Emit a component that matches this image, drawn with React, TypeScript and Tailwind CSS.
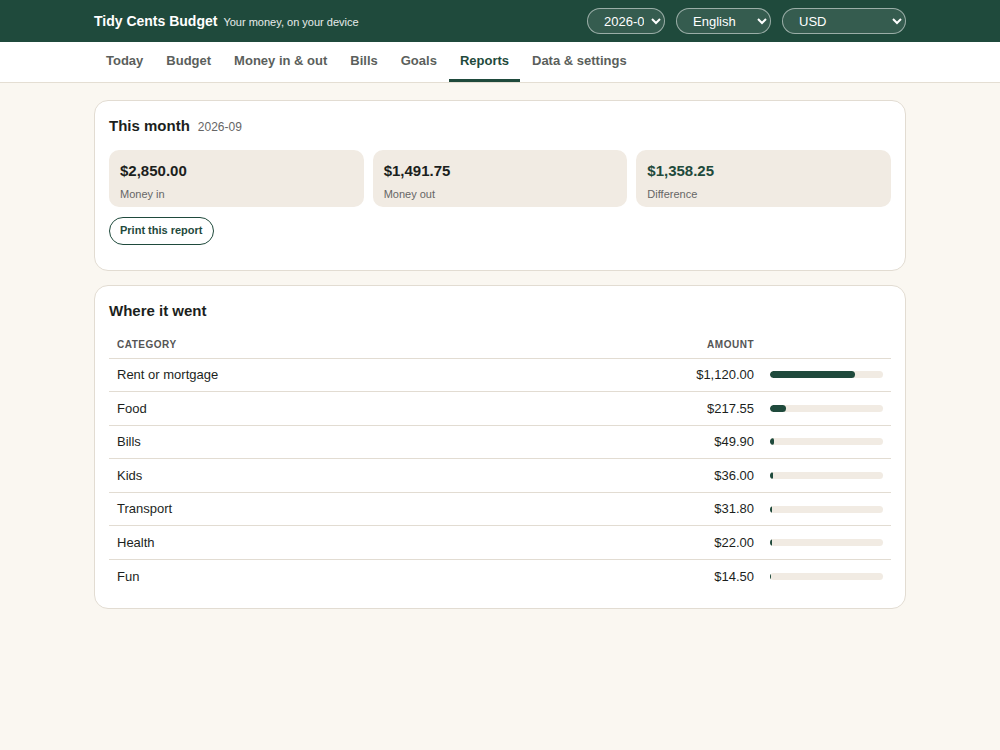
const rows: [string, number][] = [
  ["Rent or mortgage", 1120],
  ["Food", 217.55],
  ["Bills", 49.9],
  ["Kids", 36],
  ["Transport", 31.8],
  ["Health", 22],
  ["Fun", 14.5],
]
const total = 1491.75
const fmt = (n: number) => "$" + n.toLocaleString("en-US", { minimumFractionDigits: 2, maximumFractionDigits: 2 })

const tabs = ["Today", "Budget", "Money in & out", "Bills", "Goals", "Reports", "Data & settings"]

function Sel({ value, options, w }: { value: string; options: string[]; w: string }) {
  return (
    <select
      defaultValue={value}
      className={`${w} h-[26px] rounded-full border border-white/50 bg-white/10 text-white text-[13px] pl-3 pr-1`}
    >
      {options.map((o) => (
        <option key={o} className="text-black">{o}</option>
      ))}
    </select>
  )
}

export default function App() {
  return (
    <div className="min-h-[750px] bg-[#faf7f1] text-[#1c1f1d]" style={{ fontFamily: "'Liberation Sans', Arial, sans-serif" }}>
      <header className="h-[42px] bg-[#1f4a3c] text-white">
        <div className="mx-auto w-[812px] h-full flex items-center justify-between">
          <div className="flex items-baseline gap-[6px]">
            <span className="font-bold text-[14px]">Tidy Cents Budget</span>
            <span className="text-[11px] text-white/90">Your money, on your device</span>
          </div>
          <div className="flex items-center gap-[11px]">
            <Sel value="2026-09" options={["2026-09"]} w="w-[78px]" />
            <Sel value="English" options={["English"]} w="w-[95px]" />
            <Sel value="USD" options={["USD"]} w="w-[124px]" />
          </div>
        </div>
      </header>
      <nav className="h-[41px] bg-white border-b border-[#e4ded3]">
        <div className="mx-auto w-[812px] h-full flex">
          {tabs.map((t) => (
            <div
              key={t}
              className={`px-[11px] ml-[1px] h-full flex items-center text-[13px] font-bold border-b-[3px] ${
                t === "Reports" ? "text-[#1f4a3c] border-[#1f4a3c]" : "text-[#5b5f5c] border-transparent"
              }`}
            >
              {t}
            </div>
          ))}
        </div>
      </nav>
      <main className="mx-auto w-[812px] pt-[17px] flex flex-col gap-[14px]">
        <section className="bg-white border border-[#e2dcd2] rounded-[14px] px-[14px] pt-[14px] pb-[25px]">
          <div className="flex items-baseline gap-2">
            <h2 className="text-[15px] font-bold">This month</h2>
            <span className="text-[12px] text-[#666]">2026-09</span>
          </div>
          <div className="grid grid-cols-3 gap-[9px] mt-[12px]">
            {[
              ["$2,850.00", "Money in", ""],
              ["$1,491.75", "Money out", ""],
              ["$1,358.25", "Difference", "text-[#1f4a3c]"],
            ].map(([v, l, c]) => (
              <div key={l} className="h-[57px] bg-[#f1ebe3] rounded-[10px] px-[11px] pt-[10px]">
                <div className={`text-[15px] font-bold ${c}`}>{v}</div>
                <div className="text-[11px] text-[#666] mt-[4px]">{l}</div>
              </div>
            ))}
          </div>
          <button className="mt-[10px] h-[28px] px-[10px] rounded-full border border-[#1f4a3c] text-[#1f4a3c] text-[11px] font-bold">
            Print this report
          </button>
        </section>
        <section className="bg-white border border-[#e2dcd2] rounded-[14px] px-[14px] pt-[14px] pb-[15px]">
          <h2 className="text-[15px] font-bold">Where it went</h2>
          <table className="w-full mt-[9px] text-[13px]">
            <thead>
              <tr className="text-[10px] tracking-wider text-[#555] font-bold border-b border-[#e2dcd2]">
                <th className="text-left px-2 h-[27px] font-bold">CATEGORY</th>
                <th className="text-right px-2 font-bold">AMOUNT</th>
                <th className="w-[129px]" />
              </tr>
            </thead>
            <tbody>
              {rows.map(([n, a], i) => (
                <tr key={n} className={i < rows.length - 1 ? "border-b border-[#e2dcd2]" : ""}>
                  <td className="px-2 h-[33.6px]">{n}</td>
                  <td className="px-2 text-right">{fmt(a)}</td>
                  <td className="pl-2 pr-2">
                    <div className="h-[7px] w-[113px] rounded-full bg-[#f1ebe3] overflow-hidden">
                      <div className="h-full rounded-full bg-[#1f4a3c]" style={{ width: `${(a / total) * 100}%` }} />
                    </div>
                  </td>
                </tr>
              ))}
            </tbody>
          </table>
        </section>
      </main>
    </div>
  )
}
